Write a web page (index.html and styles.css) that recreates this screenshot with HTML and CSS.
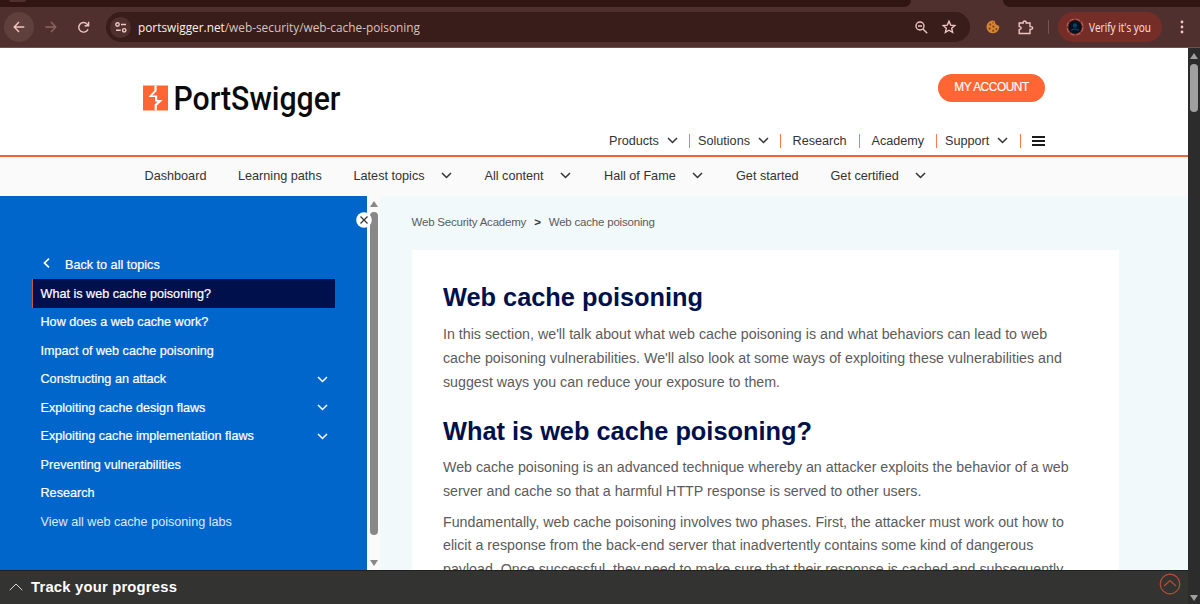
FILE: index.html
```html
<!DOCTYPE html>
<html lang="en">
<head>
<meta charset="utf-8">
<title>What is web cache poisoning? | Web Security Academy</title>
<link rel="stylesheet" href="styles.css">
</head>
<body>
<svg class="defs" width="0" height="0" aria-hidden="true">
  <symbol id="chev" viewBox="0 0 11 7"><path d="M1 1l4.5 4.5L10 1" fill="none" stroke="currentColor" stroke-width="1.5"/></symbol>
</svg>
<div class="browser">
  <div class="tabstrip"><div class="tab-left"><span class="tab-search"></span></div><div class="tab-gap"></div><div class="tab-right"></div></div>
  <div class="toolbar">
    <div class="round back"><svg width="12" height="12" viewBox="0 0 12 12"><path d="M11.3 6H1.3M6 1L1.2 6L6 11" /></svg></div>
    <svg class="fwd" width="12" height="12" viewBox="0 0 12 12"><path d="M.5 6H10.7M6 1L10.8 6L6 11"/></svg>
    <svg class="reload" width="13" height="13" viewBox="0 0 13 13"><path d="M11 8.2A4.8 4.8 0 1 1 10.2 3.2L11.5 4.6M11.6 .8V4.8H7.6"/></svg>
    <div class="omnibox">
      <div class="site"><svg width="12" height="11" viewBox="0 0 12 11"><circle cx="2.5" cy="2.5" r="1.7"/><path d="M6 2.5H11M1 8.3H5.7"/><circle cx="9.2" cy="8.3" r="1.7"/></svg></div>
      <svg class="url" width="300" height="24"><text x="0" y="17" textLength="282" lengthAdjust="spacingAndGlyphs"><tspan class="host">portswigger.net</tspan>/web-security/web-cache-poisoning</text></svg>
      <svg class="mag" width="13" height="13" viewBox="0 0 13 13"><circle cx="5" cy="5" r="4"/><path d="M8 8L12.2 12.2M3 5H7"/></svg>
      <svg class="star" width="14" height="14" viewBox="0 0 14 14"><path d="M7 1.3L8.7 5.1L12.8 5.5L9.7 8.3L10.6 12.4L7 10.2L3.4 12.4L4.3 8.3L1.2 5.5L5.3 5.1Z"/></svg>
    </div>
    <svg class="cookie" width="14" height="14" viewBox="0 0 14 14"><path d="M6.3.6Q9 .2 9.3 3Q9.5 4.8 11 4.9Q13 5.2 13.3 6.8A6.4 6.4 0 1 1 6.3.6Z" fill="#d5842f"/><g fill="#7b3f1d"><circle cx="4.2" cy="4.5" r="1"/><circle cx="7.4" cy="6.6" r="1.1"/><circle cx="3.6" cy="8.6" r="1.1"/><circle cx="7.2" cy="10.8" r="1"/><circle cx="10.4" cy="9" r="1"/><circle cx="7" cy="2.8" r=".7"/></g></svg>
    <svg class="puzzle" width="15" height="15" viewBox="0 0 15 15"><path d="M1.2 3H5.2V1.9Q6.7 .2 8.2 1.9V3H12V6.6Q14.6 6.5 14.6 8Q14.6 9.5 12 9.4V13.5H1.2V9.6Q3.2 9.5 3.2 8.1Q3.2 6.7 1.2 6.6Z"/></svg>
    <span class="tsep"></span>
    <div class="profile">
      <svg class="avatar" width="18" height="18" viewBox="0 0 18 18"><circle cx="9" cy="9" r="8" fill="none" stroke="#bf5953" stroke-width="1.2" stroke-dasharray="5 1.3"/><circle cx="9" cy="9" r="6.7" fill="#06101c"/><circle cx="9" cy="7.4" r="2.2" fill="#0c4068"/><path d="M5 12.5Q9 9.8 13 12.5" fill="none" stroke="#0c4068" stroke-width="1.2"/></svg>
      <svg width="63" height="20"><text x="0" y="15" textLength="62" lengthAdjust="spacingAndGlyphs">Verify it's you</text></svg>
    </div>
    <svg class="dots" width="4" height="14" viewBox="0 0 4 14"><circle cx="2" cy="2" r="1.4"/><circle cx="2" cy="7" r="1.4"/><circle cx="2" cy="12" r="1.4"/></svg>
  </div>
</div>
<div class="viewport">
  <div class="page">
    <header class="header">
      <div class="brandrow">
        <svg class="logo" width="210" height="44" viewBox="0 0 210 44">
          <path d="M0 5.5H25V30.5H0Z" fill="#ff6633"/>
          <path d="M11.4 5.5H13.6V11.2L9.2 15.6H14.2V20H19.6L13.8 25.8V30.5H11.6V24.6L14.6 21.6H12V17H5.6L11.4 10.4Z" fill="#fff"/>
          <text x="30.5" y="30" textLength="167" lengthAdjust="spacingAndGlyphs">PortSwigger</text>
        </svg>
        <a class="account">MY ACCOUNT</a>
      </div>
      <nav class="mainnav">
        <a>Products <svg><use href="#chev"/></svg></a>
        <a>Solutions <svg><use href="#chev"/></svg></a>
        <a>Research</a>
        <a>Academy</a>
        <a>Support <svg><use href="#chev"/></svg></a>
        <a class="menu"><i></i><i></i><i></i></a>
      </nav>
    </header>
    <nav class="subnav">
      <a>Dashboard</a><a>Learning paths</a>
      <a>Latest topics</a><svg><use href="#chev"/></svg>
      <a>All content</a><svg><use href="#chev"/></svg>
      <a>Hall of Fame</a><svg><use href="#chev"/></svg>
      <a>Get started</a><a>Get certified</a><svg><use href="#chev"/></svg>
    </nav>
    <div class="columns">
      <aside class="sidebar">
        <a class="up"><svg width="7" height="10" viewBox="0 0 7 10"><path d="M6 .7L1.5 5L6 9.3"/></svg>Back to all topics</a>
        <ul>
          <li class="current">What is web cache poisoning?</li>
          <li>How does a web cache work?</li>
          <li>Impact of web cache poisoning</li>
          <li>Constructing an attack<svg><use href="#chev"/></svg></li>
          <li>Exploiting cache design flaws<svg><use href="#chev"/></svg></li>
          <li>Exploiting cache implementation flaws<svg><use href="#chev"/></svg></li>
          <li>Preventing vulnerabilities</li>
          <li>Research</li>
          <li class="plain">View all web cache poisoning labs</li>
        </ul>
        <svg class="close" width="16" height="16" viewBox="0 0 16 16"><circle cx="8" cy="8" r="7.8" fill="#fff"/><path d="M4.5 4.5L11.5 11.5M11.5 4.5L4.5 11.5" stroke="#333" stroke-width="1.2"/></svg>
      </aside>
      <div class="sidescroll"><span class="tri-up"></span><span class="thumb"></span><span class="tri-down"></span></div>
      <main class="content">
        <div class="crumbs"><a>Web Security Academy</a><b>&gt;</b><a>Web cache poisoning</a></div>
        <article class="card">
          <h1>Web cache poisoning</h1>
          <p>In this section, we'll talk about what web cache poisoning is and what behaviors can lead to web<br>cache poisoning vulnerabilities. We'll also look at some ways of exploiting these vulnerabilities and<br>suggest ways you can reduce your exposure to them.</p>
          <h2>What is web cache poisoning?</h2>
          <p>Web cache poisoning is an advanced technique whereby an attacker exploits the behavior of a web<br>server and cache so that a harmful HTTP response is served to other users.</p>
          <p>Fundamentally, web cache poisoning involves two phases. First, the attacker must work out how to<br>elicit a response from the back-end server that inadvertently contains some kind of dangerous<br>payload. Once successful, they need to make sure that their response is cached and subsequently</p>
        </article>
      </main>
    </div>
    <footer class="progress">
      <svg class="caret" width="14" height="8" viewBox="0 0 14 8"><path d="M.7 7.2L7 1L13.3 7.2"/></svg>
      <span>Track your progress</span>
      <svg class="top" width="22" height="22" viewBox="0 0 22 22"><circle cx="11" cy="11" r="9.8"/><path d="M5 13L11 7.5L17 13"/></svg>
    </footer>
  </div>
  <div class="pagescroll"><span class="tri-up"></span><span class="thumb"></span><span class="tri-down"></span></div>
</div>
</body>
</html>
```
FILE: styles.css
```css
* { box-sizing: border-box; }
body { margin: 0; width: 1200px; height: 604px; overflow: hidden; background: #fff; font-family: "Liberation Sans", Arial, sans-serif; color: #333332; }
svg { flex: none; display: block; overflow: visible; }
.defs { position: absolute; }

/* browser chrome */
.browser { height: 48px; background: #50302e; border-bottom: 1px solid #6d504f; }
.tabstrip { height: 7px; display: flex; }
.tab-left { width: 911px; background: #301512; border-bottom-right-radius: 7px; padding-left: 9px; }
.tab-search { display: block; width: 17px; height: 2px; background: #50302e; border-radius: 0 0 8px 8px; }
.tab-gap { width: 92px; }
.tab-right { flex: 1; background: #301512; border-bottom-left-radius: 7px; }
.toolbar { height: 40px; display: flex; align-items: center; padding-left: 4px; }
.toolbar svg { fill: none; stroke: #efc6c0; stroke-width: 1.4; }
.round { width: 30px; height: 30px; border-radius: 50%; background: #60403d; display: flex; align-items: center; justify-content: center; }
.toolbar .fwd { margin-left: 11px; stroke: #8a6461; }
.reload { margin-left: 20px; }
.omnibox { width: 864px; height: 30px; margin-left: 16px; border-radius: 15px; background: #381d1a; display: flex; align-items: center; padding-left: 4px; }
.site { width: 21px; height: 21px; border-radius: 50%; background: #50302e; display: flex; align-items: center; justify-content: center; }
.url { margin-left: 7px; }
.toolbar text { stroke: none; fill: #dcc3bf; font: 13px "Open Sans", "Noto Sans", sans-serif; }
.toolbar .host { fill: #fff0ed; }
.mag { margin-left: 477px; }
.star { margin-left: 14px; }
.toolbar .cookie { margin-left: 16px; stroke: none; }
.puzzle { margin-left: 18px; }
.tsep { width: 1px; height: 14px; margin-left: 15px; background: #765451; }
.profile { width: 104px; height: 30px; margin-left: 9px; padding-left: 8px; border-radius: 15px; background: #752d28; display: flex; align-items: center; gap: 5px; }
.toolbar .profile text { fill: #ffe4e0; font-size: 12px; }
.toolbar .avatar { stroke: none; }
.toolbar .dots { margin-left: 18px; fill: #efc6c0; stroke: none; }

/* page */
.viewport { display: flex; height: 556px; }
.page { width: 1188px; display: flex; flex-direction: column; }
.header { height: 109px; border-bottom: 2px solid #f95f33; background: #fff; }
.brandrow { height: 78px; padding: 26px 143px 0; display: flex; justify-content: space-between; }
.logo { margin-top: 6px; }
.logo text { font: 500 34px Roboto, sans-serif; fill: #0b0b0b; }
.account { width: 107px; height: 28px; border-radius: 14px; background: #ff6633; color: #fff; font-size: 11.9px; line-height: 27px; text-align: center; letter-spacing: -.45px; -webkit-text-stroke: .15px #fff; }
.mainnav { display: grid; grid-template-columns: 80px 91px 79px 77px 84px 20px; margin-left: 609px; font-size: 12.65px; line-height: 14px; padding-top: 8px; }
.mainnav a { display: flex; align-items: center; height: 14px; }
.mainnav a + a { border-left: 1px solid #ff7a4f; padding-left: 8px; }
.mainnav a:nth-child(3), .mainnav a:nth-child(4) { padding-left: 11.5px; }
.mainnav svg { width: 11px; height: 7px; margin-left: 8px; margin-bottom: 2px; }
.mainnav .menu { flex-direction: column; justify-content: center; align-items: flex-start; gap: 2px; padding-left: 11px; }
.menu i { width: 13px; height: 2px; background: #1b1b1b; }
.subnav { height: 39px; background: #fafafa; display: grid; grid-template-columns: 93.5px 115.5px 87.5px 43.5px 75.5px 44px 88px 44px 94.5px 84.5px 11px; padding: 0 0 2px 144.5px; align-items: center; font-size: 12.67px; }
.subnav svg { width: 11px; height: 7px; margin-bottom: 1px; }
.columns { height: 374px; display: flex; }
.sidebar { position: relative; width: 367px; background: #0066cc; color: #fff; font-size: 12.63px; padding: 60px 32px 0; -webkit-text-stroke: .2px #fff; }
.up { display: flex; align-items: center; height: 18px; margin-bottom: 5.3px; padding-left: 11px; gap: 15px; }
.up svg { margin-bottom: 4px; }
.up path { fill: none; stroke: #fff; stroke-width: 1.7; }
.sidebar ul { margin: 0; padding: 0; list-style: none; }
.sidebar li { height: 28.5px; padding: 0 7px 0 8.5px; display: flex; align-items: center; justify-content: space-between; }
.sidebar li.current { background: #00104d; border-left: 1px solid #c9573f; padding-left: 7.5px; }
.sidebar li.plain { color: #dcebfa; -webkit-text-stroke: 0; }
.sidebar li svg { width: 11px; height: 7px; }
.close { position: absolute; left: 356px; top: 16px; z-index: 1; }
.sidescroll { width: 13px; background: #fafafa; display: flex; flex-direction: column; align-items: center; padding-top: 5px; color: #888; }
.tri-up, .tri-down { width: 0; border: 4px solid transparent; }
.tri-up { border-top: 0; border-bottom: 6px solid currentColor; }
.tri-down { border-bottom: 0; border-top: 6px solid currentColor; }
.thumb { width: 8px; border-radius: 4px; background: currentColor; }
.sidescroll .thumb { height: 323px; margin: 5px 0 25px; }
.content { flex: 1; background: #f1f9fb; padding: 18px 69px 0 31.5px; overflow: hidden; }
.crumbs { height: 36px; display: flex; font-size: 11.5px; letter-spacing: -.2px; line-height: 16px; color: #5b5b5b; }
.crumbs b { width: 22.5px; padding-left: 8px; color: #333; }
.card { height: 400px; background: #fff; padding: 30.5px 31.5px 0; }
h1, h2 { margin: 0; color: #00104d; font-size: 25.35px; line-height: 32px; }
h2 { margin-top: 20.3px; }
p { margin: 10.9px 0 0; font-size: 14.24px; line-height: 23.8px; color: #5b5b5b; white-space: nowrap; }
h2 + p { margin-top: 9.2px; }
p + p { margin-top: 6.8px; }
.progress { height: 34px; display: flex; align-items: center; background: #333332; border-top: 1px solid #20201f; color: #fff; font-size: 14.8px; letter-spacing: .2px; font-weight: bold; padding: 0 7px 1px 9px; }
.progress path, .progress circle { fill: none; stroke: #ddd; stroke-width: 1; }
.progress span { margin-left: 8px; }
.progress .top { margin: -6px 0 0 auto; }
.progress .top path, .progress .top circle { stroke: #b94e32; stroke-width: 1.2; }
.pagescroll { width: 12px; background: #2c2c2c; color: #a0a0a0; display: flex; flex-direction: column; align-items: center; padding: 5px 0 3px; }
.pagescroll .thumb { height: 48px; margin: 5px 0 auto; }
```
